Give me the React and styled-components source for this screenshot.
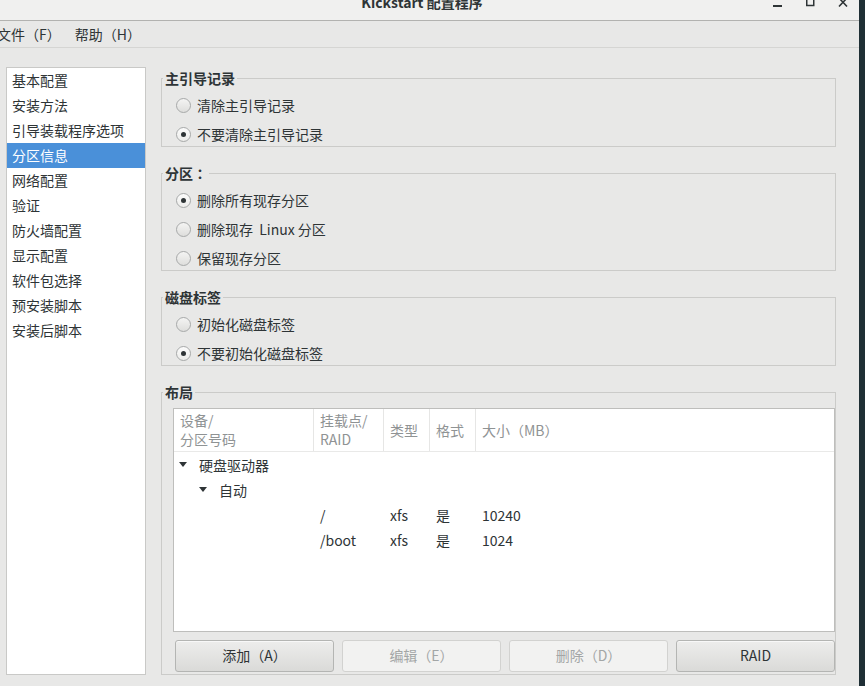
import React from "react";
import styled, { createGlobalStyle } from "styled-components";

const GlobalStyle = createGlobalStyle`
  html, body {
    margin: 0;
    padding: 0;
    background: #203036;
  }
  body {
    font-family: "Noto Sans CJK SC", "Noto Sans", sans-serif;
    font-size: 14px;
    color: #2e3436;
  }
  * {
    box-sizing: border-box;
  }
`;

const navItems = [
  "基本配置",
  "安装方法",
  "引导装载程序选项",
  "分区信息",
  "网络配置",
  "验证",
  "防火墙配置",
  "显示配置",
  "软件包选择",
  "预安装脚本",
  "安装后脚本",
];

const partitions = [
  { mount: "/", type: "xfs", format: "是", size: "10240" },
  { mount: "/boot", type: "xfs", format: "是", size: "1024" },
];

const App = () => {
  return (
    <Screen>
      <GlobalStyle />
      <Window>
        <TitleBar>
          <Title>Kickstart 配置程序</Title>
          <WinControls>
            <WinButton>
              <svg width="10" height="8" viewBox="0 0 10 8">
                <rect x="1" y="5" width="9" height="2" fill="#2e3436" />
              </svg>
            </WinButton>
            <WinButton>
              <svg width="10" height="8" viewBox="0 0 10 8">
                <rect x="1.75" y="-2" width="7" height="7.5" fill="none" stroke="#2e3436" strokeWidth="1.5" />
              </svg>
            </WinButton>
            <WinButton>
              <svg width="10" height="8" viewBox="0 0 10 8">
                <path d="M1 -2 L9 6.5 M9 -2 L1 6.5" stroke="#2e3436" strokeWidth="1.6" />
              </svg>
            </WinButton>
          </WinControls>
        </TitleBar>

        <MenuBar>
          <MenuItem>文件（F）</MenuItem>
          <MenuItem>帮助（H）</MenuItem>
        </MenuBar>

        <Body>
          <Sidebar>
            {navItems.map((item) => (
              <NavItem key={item} $active={item === "分区信息"}>
                {item}
              </NavItem>
            ))}
          </Sidebar>

          <Panel>
            <Frame>
              <Legend>主引导记录</Legend>
              <Options>
                <RadioRow>
                  <Radio />
                  清除主引导记录
                </RadioRow>
                <RadioRow>
                  <Radio $checked />
                  不要清除主引导记录
                </RadioRow>
              </Options>
            </Frame>

            <Frame>
              <Legend>
                分区<Punct>：</Punct>
              </Legend>
              <Options>
                <RadioRow>
                  <Radio $checked />
                  删除所有现存分区
                </RadioRow>
                <RadioRow>
                  <Radio />
                  删除现存&nbsp; Linux 分区
                </RadioRow>
                <RadioRow>
                  <Radio />
                  保留现存分区
                </RadioRow>
              </Options>
            </Frame>

            <Frame>
              <Legend>磁盘标签</Legend>
              <Options>
                <RadioRow>
                  <Radio />
                  初始化磁盘标签
                </RadioRow>
                <RadioRow>
                  <Radio $checked />
                  不要初始化磁盘标签
                </RadioRow>
              </Options>
            </Frame>

            <Frame $grow>
              <Legend>布局</Legend>
              <LayoutBody>
                <Tree>
                  <TreeHeader>
                    <HeadCell>
                      设备/
                      <br />
                      分区号码
                    </HeadCell>
                    <HeadCell>
                      挂载点/
                      <br />
                      RAID
                    </HeadCell>
                    <HeadCell>类型</HeadCell>
                    <HeadCell>格式</HeadCell>
                    <HeadCell $last>大小（MB）</HeadCell>
                  </TreeHeader>

                  <TreeRow>
                    <NodeCell $depth={0}>
                      <Expander />
                      硬盘驱动器
                    </NodeCell>
                  </TreeRow>
                  <TreeRow>
                    <NodeCell $depth={1}>
                      <Expander />
                      自动
                    </NodeCell>
                  </TreeRow>
                  {partitions.map((p) => (
                    <TreeRow key={p.mount}>
                      <Cell />
                      <Cell>{p.mount}</Cell>
                      <Cell>{p.type}</Cell>
                      <Cell>{p.format}</Cell>
                      <Cell>{p.size}</Cell>
                    </TreeRow>
                  ))}
                </Tree>

                <ButtonRow>
                  <Button>添加（A）</Button>
                  <Button disabled>编辑（E）</Button>
                  <Button disabled>删除（D）</Button>
                  <Button>RAID</Button>
                </ButtonRow>
              </LayoutBody>
            </Frame>
          </Panel>
        </Body>
      </Window>
      <DesktopEdge />
    </Screen>
  );
};

const Expander = () => (
  <ExpanderIcon width="8" height="5" viewBox="0 0 8 5">
    <path d="M0 0 L8 0 L4 5 Z" fill="#2e3436" />
  </ExpanderIcon>
);

export default App;

// Styled Components
const Screen = styled.div`
  display: flex;
  width: 865px;
  height: 686px;
  overflow: hidden;
`;

const Window = styled.div`
  flex: 1;
  display: flex;
  flex-direction: column;
  background: #e8e8e7;
  min-width: 0;
`;

const DesktopEdge = styled.div`
  width: 6px;
  background: #1f2f35;
`;

const TitleBar = styled.div`
  display: flex;
  height: 21px;
  background: #f0f0ef;
  border-bottom: 1px solid #b2b2b0;
  overflow: hidden;
`;

const Title = styled.div`
  flex: 1;
  padding-left: 84px;
  text-align: center;
  font-weight: bold;
  font-size: 14px;
  line-height: 16px;
  margin-top: -6px;
  color: #2e3436;
`;

const WinControls = styled.div`
  display: flex;
  width: 99px;
`;

const WinButton = styled.div`
  width: 33px;
  display: flex;
  justify-content: center;
  align-items: flex-start;
`;

const MenuBar = styled.div`
  display: flex;
  align-items: center;
  height: 27px;
  border-bottom: 1px solid #d5d5d3;
  & > :first-child {
    margin-left: -10px;
  }
`;

const MenuItem = styled.div`
  padding: 0 7px;
  line-height: 26px;
`;

const Body = styled.div`
  flex: 1;
  display: grid;
  grid-template-columns: 140px 1fr;
  gap: 15px;
  padding: 19px 23px 11px 6px;
  min-height: 0;
`;

const Sidebar = styled.div`
  background: #ffffff;
  border: 1px solid #c9c9c7;
`;

const NavItem = styled.div`
  height: 25px;
  line-height: 24px;
  padding-left: 5px;
  background: ${(p) => (p.$active ? "#4a90d9" : "transparent")};
  color: ${(p) => (p.$active ? "#ffffff" : "#2e3436")};
`;

const Panel = styled.div`
  display: flex;
  flex-direction: column;
  gap: 17px;
  padding-top: 2px;
  min-height: 0;
`;

const Frame = styled.fieldset`
  margin: 0;
  padding: 0;
  min-width: 0;
  border: 1px solid #cbcbc9;
  display: flex;
  flex-direction: column;
  flex: ${(p) => (p.$grow ? 1 : "none")};
  min-height: 0;
`;

const Legend = styled.legend`
  margin-left: 1px;
  padding: 0 2px;
  font-weight: bold;
  line-height: 18px;
  color: #2e3436;
`;

const Punct = styled.span`
  font-family: "Noto Sans CJK TC", sans-serif;
`;

const Options = styled.div`
  display: flex;
  flex-direction: column;
  gap: 5px;
  padding: 6px 0 0 14px;
`;

const RadioRow = styled.label`
  display: flex;
  align-items: center;
  gap: 6px;
  height: 24px;
  white-space: pre;
`;

const Radio = styled.span`
  position: relative;
  width: 15px;
  height: 15px;
  border-radius: 50%;
  border: 1px solid #a7a9a9;
  background: ${(p) =>
    p.$checked
      ? "linear-gradient(#fbfbfb, #ececea)"
      : "linear-gradient(#f4f4f3, #dededc)"};
  flex: none;
  &::after {
    content: "";
    display: ${(p) => (p.$checked ? "block" : "none")};
    position: absolute;
    left: 4px;
    top: 4px;
    width: 5px;
    height: 5px;
    border-radius: 50%;
    background: #2e3436;
  }
`;

const LayoutBody = styled.div`
  flex: 1;
  display: flex;
  flex-direction: column;
  gap: 8px;
  padding: 7px 0 2px 11px;
  min-height: 0;
`;

const Tree = styled.div`
  flex: 1;
  background: #ffffff;
  border: 1px solid #bebebc;
`;

const columns = "140px 70px 46px 46px 1fr";

const TreeHeader = styled.div`
  display: grid;
  grid-template-columns: ${columns};
  border-bottom: 1px solid #e9e9e8;
`;

const HeadCell = styled.div`
  display: flex;
  align-items: center;
  padding: 2px 6px;
  line-height: 19px;
  color: #8f9394;
  border-right: ${(p) => (p.$last ? "none" : "1px solid #e6e6e5")};
`;

const TreeRow = styled.div`
  display: grid;
  grid-template-columns: ${columns};
  height: 25px;
  align-items: center;
`;

const Cell = styled.div`
  padding-left: 6px;
  white-space: nowrap;
`;

const NodeCell = styled.div`
  grid-column: 1 / -1;
  display: flex;
  align-items: center;
  gap: 12px;
  padding-left: ${(p) => 5 + p.$depth * 20}px;
`;

const ExpanderIcon = styled.svg`
  flex: none;
`;

const ButtonRow = styled.div`
  display: grid;
  grid-template-columns: repeat(4, 1fr);
  gap: 8px;
  padding-left: 2px;
`;

const Button = styled.button`
  height: 32px;
  padding: 0 0 3px;
  font-family: inherit;
  font-size: 14px;
  border-radius: 3px;
  color: #2e3436;
  border: 1px solid #b4b5b3;
  background: linear-gradient(#ededec, #dadad8);
  box-shadow: inset 0 1px 0 #f8f8f8;
  &:disabled {
    color: #a3a6a6;
    border-color: #d2d2d0;
    background: #f2f2f1;
    box-shadow: none;
  }
`;
